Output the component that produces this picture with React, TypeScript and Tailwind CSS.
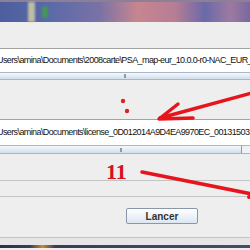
export default function App() {
  return (
    <div className="relative w-[250px] h-[250px] overflow-hidden bg-[#eeeeee] font-['Liberation_Sans',Arial,sans-serif]">
      {/* desktop strip behind the window */}
      <div className="relative h-[22px] bg-[linear-gradient(90deg,#4d5e9e_0%,#5a6aa8_20%,#7a72a6_40%,#c7868f_55%,#b67d95_70%,#6a6aa8_82%,#9d7aa0_92%,#7a68a0_100%)]">
        <div className="h-[2px] bg-[#8c7f96]" />
        <div className="absolute left-[28px] top-[2px] w-[7px] h-[20px] bg-[#d8d3a8] opacity-80 blur-[1px]" />
        <div className="absolute left-[42px] top-[6px] w-[6px] h-[12px] bg-[#3fa24a] rounded-sm opacity-80 blur-[1px]" />
      </div>

      <div className="h-[26px]" />

      {/* first path field */}
      <div className="border-t border-[#a3a3a3] bg-white h-[24px] flex items-center overflow-hidden whitespace-nowrap">
        <span className="text-[9px] text-[#111] ml-[-3px] tracking-[-0.6px]">Users\amina\Documents\2008carte\PSA_map-eur_10.0.0-r0-NAC_EUR_WAVE</span>
      </div>
      <div className="h-[8px] border-y border-[#a9b6c6] bg-[linear-gradient(#f4f8fc,#d3dfec)] flex justify-center items-center">
        <div className="w-[2px] h-[4px] border-x border-[#8c9aab]" />
      </div>

      <div className="h-[39px]" />

      {/* second path field */}
      <div className="border-t border-[#a3a3a3] bg-white h-[26px] flex items-center overflow-hidden whitespace-nowrap">
        <span className="text-[9px] text-[#111] ml-[-3px] tracking-[-0.6px]">Users\amina\Documents\license_0D012014A9D4EA9970EC_001315031511912</span>
      </div>
      <div className="h-[9px] flex border-y border-[#a9b6c6]">
        <div className="w-[242px] bg-[linear-gradient(#f4f8fc,#d3dfec)] border-r border-[#8c9aab] flex justify-center items-center">
          <div className="w-[2px] h-[4px] border-x border-[#8c9aab]" />
        </div>
        <div className="flex-1 bg-[#eef2f6]" />
      </div>

      <div className="h-[26px]" />
      <div className="h-px bg-[#c4c4c4]" />
      <div className="h-[15px]" />
      <div className="h-px bg-[#c4c4c4]" />

      <div className="h-[11px]" />
      <div className="flex justify-end pr-[52px]">
        <button className="w-[72px] h-[16px] border border-[#8a97a8] rounded-[2px] bg-[linear-gradient(#ffffff,#dce6f1)] text-[10px] font-bold text-[#333] flex items-center justify-center">
          Lancer
        </button>
      </div>

      <div className="h-[13px]" />
      <div className="h-px bg-[#c4c4c4]" />
      <div className="h-[7px] bg-[#e6e6e6]" />
      <div className="h-[3px] bg-[linear-gradient(90deg,#2c2f4a_0%,#3a3d5a_12%,#c9892c_17%,#3a3d5a_22%,#4a4a6a_100%)]" />

      {/* red annotations */}
      <svg className="absolute left-0 top-0 pointer-events-none" width="250" height="250">
        <circle cx="123" cy="101" r="2.2" fill="#e02020" />
        <circle cx="127" cy="111" r="2.2" fill="#e02020" />
        <path d="M252 93 L160 118" stroke="#e8141c" strokeWidth="3.5" strokeLinecap="round" />
        <path d="M178 104 L159 119 L193 118" stroke="#e8141c" strokeWidth="3.5" fill="none" strokeLinecap="round" strokeLinejoin="round" />
        <path d="M142 172 L252 194" stroke="#e8141c" strokeWidth="3.5" strokeLinecap="round" />
        <circle cx="249" cy="197" r="2" fill="#e8141c" />
      </svg>
      <div className="absolute left-[106px] top-[161px] font-['Liberation_Serif',serif] font-bold text-[22px] text-[#d6121c] leading-none">11</div>
    </div>
  );
}
